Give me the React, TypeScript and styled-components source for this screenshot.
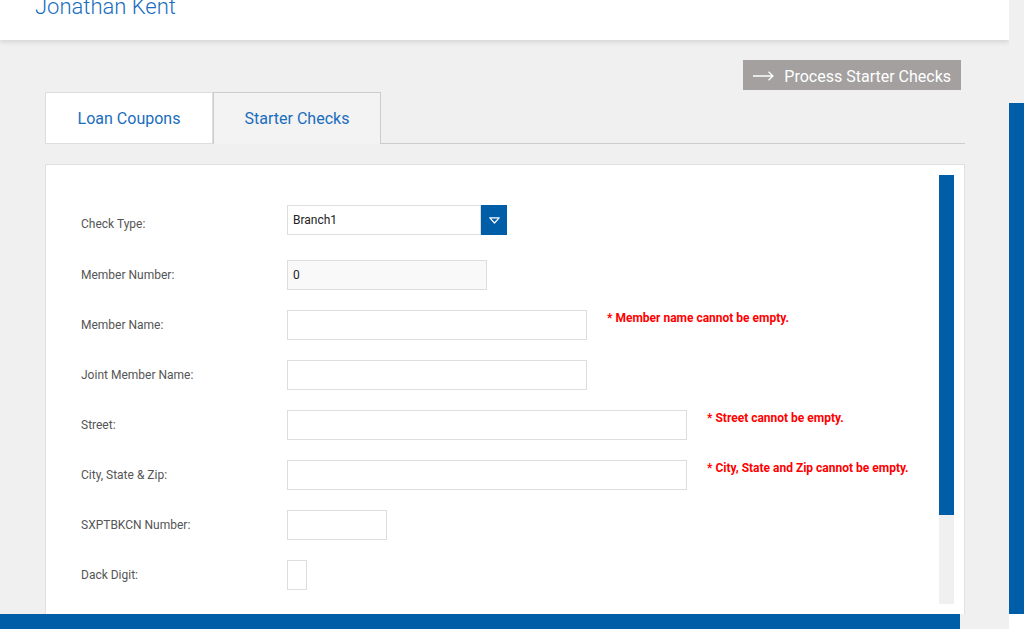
import React from "react";
import styled, { createGlobalStyle } from "styled-components";

const blue = "#005da8";

const GlobalStyle = createGlobalStyle`
  body {
    margin: 0;
    font-family: Roboto, "Liberation Sans", sans-serif;
    background: #f0f0f0;
  }
  * {
    box-sizing: border-box;
  }
`;

const Frame = styled.div`
  width: 1024px;
  height: 629px;
  display: grid;
  grid-template-columns: 1fr 15px;
  grid-template-rows: 1fr 15px;
  overflow: hidden;
  background: #f0f0f0;
`;

const Main = styled.div`
  display: flex;
  flex-direction: column;
  overflow: hidden;
`;

const Header = styled.div`
  height: 40px;
  flex-shrink: 0;
  background: #fff;
  padding-left: 35px;
  box-shadow: 0 2px 5px rgba(0, 0, 0, 0.12);
  position: relative;
  z-index: 1;
  overflow: hidden;
`;

const UserName = styled.div`
  margin-top: -4px;
  font-size: 22px;
  line-height: 22px;
  font-weight: 300;
  color: #1a6dbd;
`;

const Content = styled.div`
  padding: 20px 44px 0 45px;
  display: flex;
  flex-direction: column;
`;

const ActionRow = styled.div`
  display: flex;
  justify-content: flex-end;
  padding-right: 4px;
`;

const ActionButton = styled.button`
  height: 30px;
  display: flex;
  align-items: center;
  gap: 10px;
  padding: 2px 10px 0 10px;
  border: none;
  background: #a3a09f;
  color: #fff;
  font-family: Roboto, "Liberation Sans", sans-serif;
  font-size: 16px;
  cursor: pointer;
`;

const TabBar = styled.div`
  margin-top: 2px;
  height: 52px;
  display: flex;
  border-bottom: 1px solid #ccc;
`;

const Tab = styled.div<{ $active?: boolean }>`
  width: 168px;
  height: 52px;
  margin-bottom: -1px;
  display: flex;
  align-items: center;
  justify-content: center;
  font-size: 16px;
  color: #1a6dbd;
  background: ${(p) => (p.$active ? "#f3f3f3" : "#fff")};
  border: 1px solid ${(p) => (p.$active ? "#ccc" : "#ddd")};
  border-bottom: ${(p) => (p.$active ? "none" : "1px solid #ddd")};
  padding-bottom: ${(p) => (p.$active ? "1px" : "0")};
`;

const Panel = styled.div`
  margin-top: 20px;
  height: 451px;
  background: #fff;
  border: 1px solid #e0e0e0;
  display: flex;
  padding: 10px 10px 10px 0;
`;

const Form = styled.div`
  flex: 1;
  padding: 30px 0 0 35px;
  display: flex;
  flex-direction: column;
  gap: 20px;
`;

const Row = styled.div<{ $extra?: number }>`
  display: flex;
  align-items: flex-start;
  height: 30px;
  margin-bottom: ${(p) => p.$extra ?? 0}px;
`;

const Label = styled.div<{ $drop?: number }>`
  width: 206px;
  padding-top: ${(p) => 8 + (p.$drop ?? 0)}px;
  font-size: 12px;
  line-height: 14px;
  color: #555;
`;

const Input = styled.div<{ $w: number; $muted?: boolean }>`
  width: ${(p) => p.$w}px;
  height: 30px;
  border: 1px solid #ddd;
  background: ${(p) => (p.$muted ? "#f9f9f9" : "#fff")};
  padding: 0 5px;
  display: flex;
  align-items: center;
  font-size: 12px;
  color: #222;
`;

const Select = styled.div`
  display: flex;
  height: 30px;
`;

const SelectButton = styled.div`
  width: 26px;
  height: 30px;
  background: ${blue};
  display: flex;
  align-items: center;
  justify-content: center;
`;

const Error = styled.div`
  margin-left: 20px;
  padding-top: 1px;
  font-size: 12px;
  line-height: 14px;
  font-weight: 700;
  color: #ff0000;
`;

const ScrollTrack = styled.div<{ $dir: "v" | "h" }>`
  background: #f0f0f0;
  display: flex;
  flex-direction: ${(p) => (p.$dir === "v" ? "column" : "row")};
  justify-content: ${(p) => (p.$dir === "v" ? "flex-end" : "flex-start")};
`;

const InnerTrack = styled.div`
  width: 15px;
  background: #f0f0f0;
  flex-shrink: 0;
`;

const Thumb = styled.div<{ $size: number; $dir: "v" | "h" }>`
  background: ${blue};
  ${(p) =>
    p.$dir === "v" ? `height: ${p.$size}px; width: 100%;` : `width: ${p.$size}px; height: 100%;`}
`;

const Corner = styled.div`
  background: #fff;
`;

const fields = [
  { label: "Member Name:", width: 300, error: "* Member name cannot be empty." },
  { label: "Joint Member Name:", width: 300 },
  { label: "Street:", width: 400, error: "* Street cannot be empty." },
  { label: "City, State & Zip:", width: 400, error: "* City, State and Zip cannot be empty." },
  { label: "SXPTBKCN Number:", width: 100 },
  { label: "Dack Digit:", width: 20 },
];

const ArrowIcon = () => (
  <svg width="21" height="10" viewBox="0 0 21 10" fill="none">
    <path d="M0 5h20M15.5 0.8L20 5l-4.5 4.2" stroke="#fff" strokeWidth="1.3" />
  </svg>
);

const DownIcon = () => (
  <svg width="11" height="7" viewBox="0 0 11 7" fill="none">
    <path d="M0.8 0.8h9.4L5.5 6z" stroke="#fff" strokeWidth="1.2" strokeLinejoin="round" />
  </svg>
);

const App = () => {
  return (
    <>
      <GlobalStyle />
      <Frame>
        <Main>
          <Header>
            <UserName>Jonathan Kent</UserName>
          </Header>
          <Content>
            <ActionRow>
              <ActionButton>
                <ArrowIcon />
                Process Starter Checks
              </ActionButton>
            </ActionRow>
            <TabBar>
              <Tab>Loan Coupons</Tab>
              <Tab $active>Starter Checks</Tab>
            </TabBar>
            <Panel>
              <Form>
                <Row $extra={5}>
                  <Label $drop={4}>Check Type:</Label>
                  <Select>
                    <Input $w={194}>Branch1</Input>
                    <SelectButton>
                      <DownIcon />
                    </SelectButton>
                  </Select>
                </Row>
                <Row>
                  <Label>Member Number:</Label>
                  <Input $w={200} $muted>
                    0
                  </Input>
                </Row>
                {fields.map((f) => (
                  <Row key={f.label}>
                    <Label>{f.label}</Label>
                    <Input $w={f.width} />
                    {f.error && <Error>{f.error}</Error>}
                  </Row>
                ))}
              </Form>
              <InnerTrack>
                <Thumb $dir="v" $size={340} />
              </InnerTrack>
            </Panel>
          </Content>
        </Main>
        <ScrollTrack $dir="v">
          <Thumb $dir="v" $size={511} />
        </ScrollTrack>
        <ScrollTrack $dir="h">
          <Thumb $dir="h" $size={960} />
        </ScrollTrack>
        <Corner />
      </Frame>
    </>
  );
};

export default App;
